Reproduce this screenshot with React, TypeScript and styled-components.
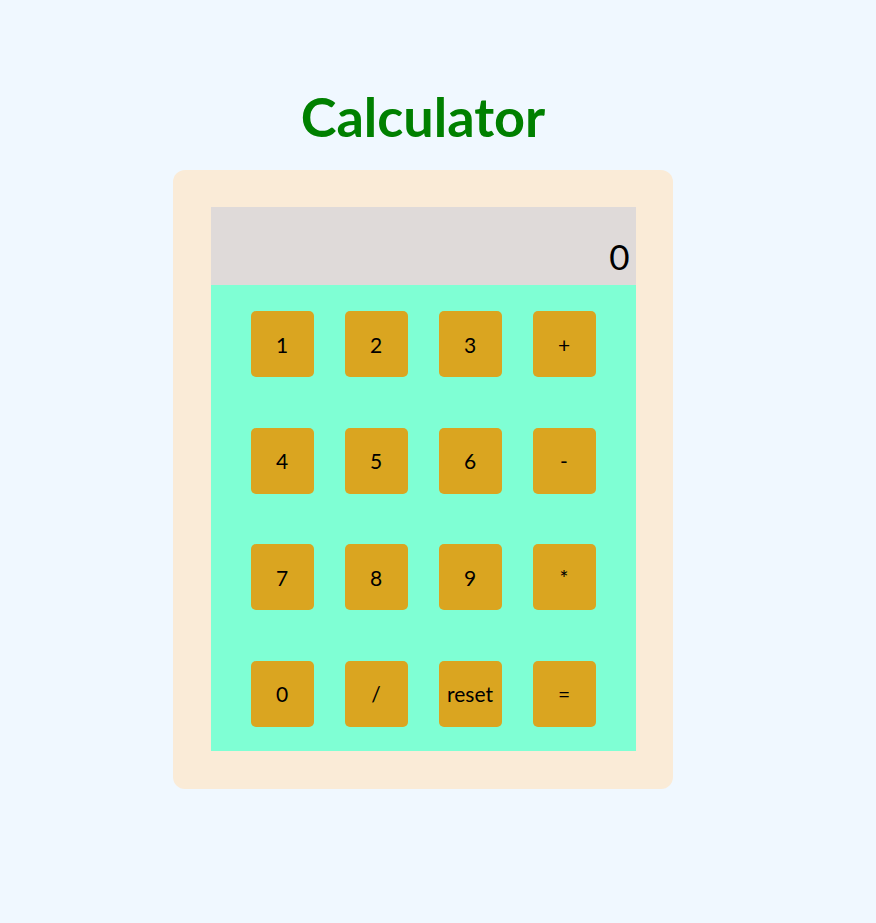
import React from "react";
import styled, { createGlobalStyle } from "styled-components";

const Global = createGlobalStyle`
  html, body { margin: 0; padding: 0; background: #f0f8ff; }
  body { font-family: "Lato", "Open Sans", sans-serif; }
`;

const Page = styled.div`
  min-height: 923px;
  display: flex;
  flex-direction: column;
  align-items: center;
  padding-right: 30px;
  box-sizing: border-box;
`;

const Title = styled.h1`
  margin: 86px 0 0;
  height: 84px;
  font-family: "Lato", sans-serif;
  font-weight: 700;
  font-size: 54px;
  line-height: 62px;
  color: #008000;
`;

const Body = styled.div`
  width: 500px;
  box-sizing: border-box;
  padding: 37px 0 38px;
  background: #faebd7;
  border-radius: 12px;
  display: flex;
  flex-direction: column;
  align-items: center;
`;

const Display = styled.div`
  width: 425px;
  height: 78px;
  box-sizing: border-box;
  background: #dfdad9;
  display: flex;
  justify-content: flex-end;
  align-items: flex-end;
  padding: 0 6px 9px 0;
  font-size: 35px;
  line-height: 40px;
  color: #000;
`;

const Keypad = styled.div`
  width: 425px;
  box-sizing: border-box;
  background: #7fffd4;
  display: grid;
  grid-template-columns: repeat(4, 63px);
  grid-auto-rows: 66px;
  column-gap: 31px;
  row-gap: 50.5px;
  padding: 26px 40px 24.5px 40px;
`;

const Key = styled.button`
  border: none;
  margin: 0;
  padding: 0;
  background: #daa520;
  border-radius: 5px;
  font-family: "Lato", sans-serif;
  font-size: 21px;
  color: #000;
  display: flex;
  align-items: center;
  justify-content: center;
  cursor: pointer;
`;

const keys = ["1", "2", "3", "+", "4", "5", "6", "-", "7", "8", "9", "*", "0", "/", "reset", "="];

export default function App() {
  return (
    <>
      <Global />
      <Page>
        <Title>Calculator</Title>
        <Body>
          <Display>0</Display>
          <Keypad>
            {keys.map((k) => (
              <Key key={k}>{k}</Key>
            ))}
          </Keypad>
        </Body>
      </Page>
    </>
  );
}
